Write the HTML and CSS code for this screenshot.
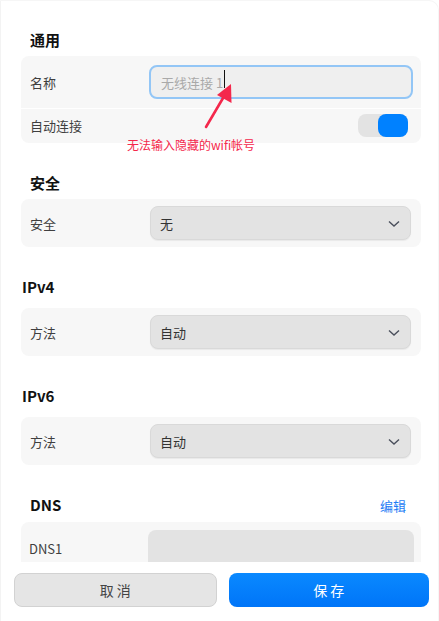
FILE: index.html
```html
<!DOCTYPE html>
<html lang="zh">
<head>
<meta charset="utf-8">
<link rel="stylesheet" href="styles.css">
</head>
<body>
<div class="window">
  <div class="scroll">
    <section class="section">
      <h2 class="heading">通用</h2>
      <div class="card">
        <div class="row row-tall">
          <span class="label">名称</span>
          <div class="input focused"><span class="placeholder">无线连接 1</span><span class="caret"></span></div>
        </div>
        <div class="sep"></div>
        <div class="row row-switch">
          <span class="label">自动连接</span>
          <div class="switch"><span class="knob"></span></div>
        </div>
      </div>
    </section>

    <section class="section">
      <h2 class="heading">安全</h2>
      <div class="card">
        <div class="row">
          <span class="label">安全</span>
          <div class="select"><span>无</span>
            <svg class="chev" width="12" height="8" viewBox="0 0 12 8"><path d="M1 1.5 L6 6 L11 1.5" fill="none" stroke="#4a4f5c" stroke-width="1.4"/></svg>
          </div>
        </div>
      </div>
    </section>

    <section class="section ip">
      <h2 class="heading heading-flush">IPv4</h2>
      <div class="card">
        <div class="row">
          <span class="label">方法</span>
          <div class="select"><span>自动</span>
            <svg class="chev" width="12" height="8" viewBox="0 0 12 8"><path d="M1 1.5 L6 6 L11 1.5" fill="none" stroke="#4a4f5c" stroke-width="1.4"/></svg>
          </div>
        </div>
      </div>
    </section>

    <section class="section ip">
      <h2 class="heading heading-flush">IPv6</h2>
      <div class="card">
        <div class="row">
          <span class="label">方法</span>
          <div class="select"><span>自动</span>
            <svg class="chev" width="12" height="8" viewBox="0 0 12 8"><path d="M1 1.5 L6 6 L11 1.5" fill="none" stroke="#4a4f5c" stroke-width="1.4"/></svg>
          </div>
        </div>
      </div>
    </section>

    <section class="section dns">
      <div class="heading-row">
        <h2 class="heading">DNS</h2>
        <a class="edit">编辑</a>
      </div>
      <div class="card">
        <div class="row row-dns">
          <span class="label">DNS1</span>
          <div class="field"></div>
        </div>
      </div>
    </section>
  </div>

  <div class="footer">
    <button class="btn btn-cancel">取消</button>
    <button class="btn btn-save">保存</button>
  </div>

  <div class="annotation">
    <svg class="arrow" width="50" height="60" viewBox="0 0 50 60">
      <line x1="10" y1="52" x2="30" y2="18" stroke="#f4284c" stroke-width="2.6" stroke-linecap="round"/>
      <polygon points="35,9 35.5,28 21,20" fill="#f4284c"/>
    </svg>
    <span class="note">无法输入隐藏的wifi帐号</span>
  </div>
</div>
</body>
</html>
```

FILE: styles.css
```css
* { box-sizing: border-box; }
html, body {
  margin: 0;
  padding: 0;
  background: #ffffff;
}
body {
  font-family: "Noto Sans CJK SC", "Noto Sans", sans-serif;
  color: #3d3d3d;
}
.window {
  position: relative;
  width: 439px;
  height: 621px;
  display: flex;
  flex-direction: column;
  background: #ffffff;
  border-left: 1px solid #f3f3f3;
  border-top: 1px solid #f6f6f6;
  border-right: 1px solid #f6f6f6;
  border-top-right-radius: 10px;
  overflow: hidden;
}
.scroll {
  flex: 1;
  overflow: hidden;
  padding: 29px 17px 0 20px;
  display: flex;
  flex-direction: column;
}
.section { display: flex; flex-direction: column; }
.section + .section { margin-top: 30px; }
.heading {
  margin: 0 0 6px 9px;
  height: 20px;
  line-height: 20px;
  font-size: 15px;
  font-weight: 700;
  color: #111;
}
.heading-flush { margin-left: 1px; }
.ip .heading { margin-bottom: 11px; }
.heading-row {
  display: flex;
  justify-content: space-between;
  align-items: center;
  margin-bottom: 7px;
}
.heading-row .heading { margin-bottom: 0; }
.edit {
  font-size: 13px;
  color: #1e7cf5;
  margin-right: 15px;
}
.card {
  background: #f7f7f7;
  border-radius: 8px;
  display: flex;
  flex-direction: column;
}
.row {
  display: grid;
  grid-template-columns: 120px 1fr;
  align-items: center;
  padding: 7px 10px 7px 9px;
  min-height: 48px;
}
.row-tall {
  grid-template-columns: 119px 1fr;
  padding: 9px 8px 9px 9px;
  min-height: 52px;
}
.row-switch {
  display: flex;
  justify-content: space-between;
  min-height: 34px;
  padding: 5px 13px 6px 9px;
}
.sep { height: 1px; background: #ffffff; }
.label {
  font-size: 13px;
  color: #3f3f3f;
}
.input {
  height: 34px;
  border: 2px solid #93c6f6;
  border-radius: 8px;
  background: #efefef;
  display: flex;
  align-items: center;
  padding-left: 10px;
}
.placeholder {
  font-size: 13px;
  color: #a9a9a9;
}
.caret {
  display: inline-block;
  width: 1px;
  height: 18px;
  background: #111;
  margin-left: 1px;
  margin-top: -6px;
}
.switch {
  width: 50px;
  height: 23px;
  background: #e3e3e3;
  border-radius: 8px;
  display: flex;
  justify-content: flex-end;
}
.knob {
  width: 30px;
  height: 23px;
  background: #0081ff;
  border-radius: 8px;
}
.select {
  height: 34px;
  background: #e3e3e3;
  border: 1px solid #d9d9d9;
  border-radius: 8px;
  display: flex;
  align-items: center;
  justify-content: space-between;
  padding: 0 10px 0 9px;
  font-size: 13px;
  color: #333;
  box-shadow: 0 1px 1px rgba(0,0,0,0.06);
}
.chev { margin-top: 1px; }
.row-dns {
  grid-template-columns: 119px 1fr;
  padding: 8px 7px 0 8px;
  align-items: start;
}
.row-dns .label { margin-top: 9px; }
.field {
  height: 40px;
  background: #e3e3e3;
  border-radius: 8px 8px 0 0;
}
.footer {
  height: 59px;
  display: flex;
  gap: 12px;
  padding: 11px 9px 14px 13px;
  background: #ffffff;
}
.btn {
  flex: 1;
  height: 34px;
  border-radius: 8px;
  font-family: "Noto Sans CJK SC", "Noto Sans", sans-serif;
  font-size: 14px;
  letter-spacing: 3px;
  text-indent: 3px;
}
.btn-cancel {
  background: #e5e5e5;
  border: 1px solid #d2d2d2;
  color: #444;
}
.btn-save {
  background: linear-gradient(#0a89ff, #0075f8);
  border: none;
  color: #ffffff;
}
.annotation {
  position: absolute;
  left: 126px;
  top: 74px;
  width: 200px;
  height: 80px;
}
.arrow {
  position: absolute;
  left: 69px;
  top: 0;
}
.note {
  position: absolute;
  left: 0;
  top: 61px;
  font-size: 12px;
  color: #f4284c;
  white-space: nowrap;
}
```
